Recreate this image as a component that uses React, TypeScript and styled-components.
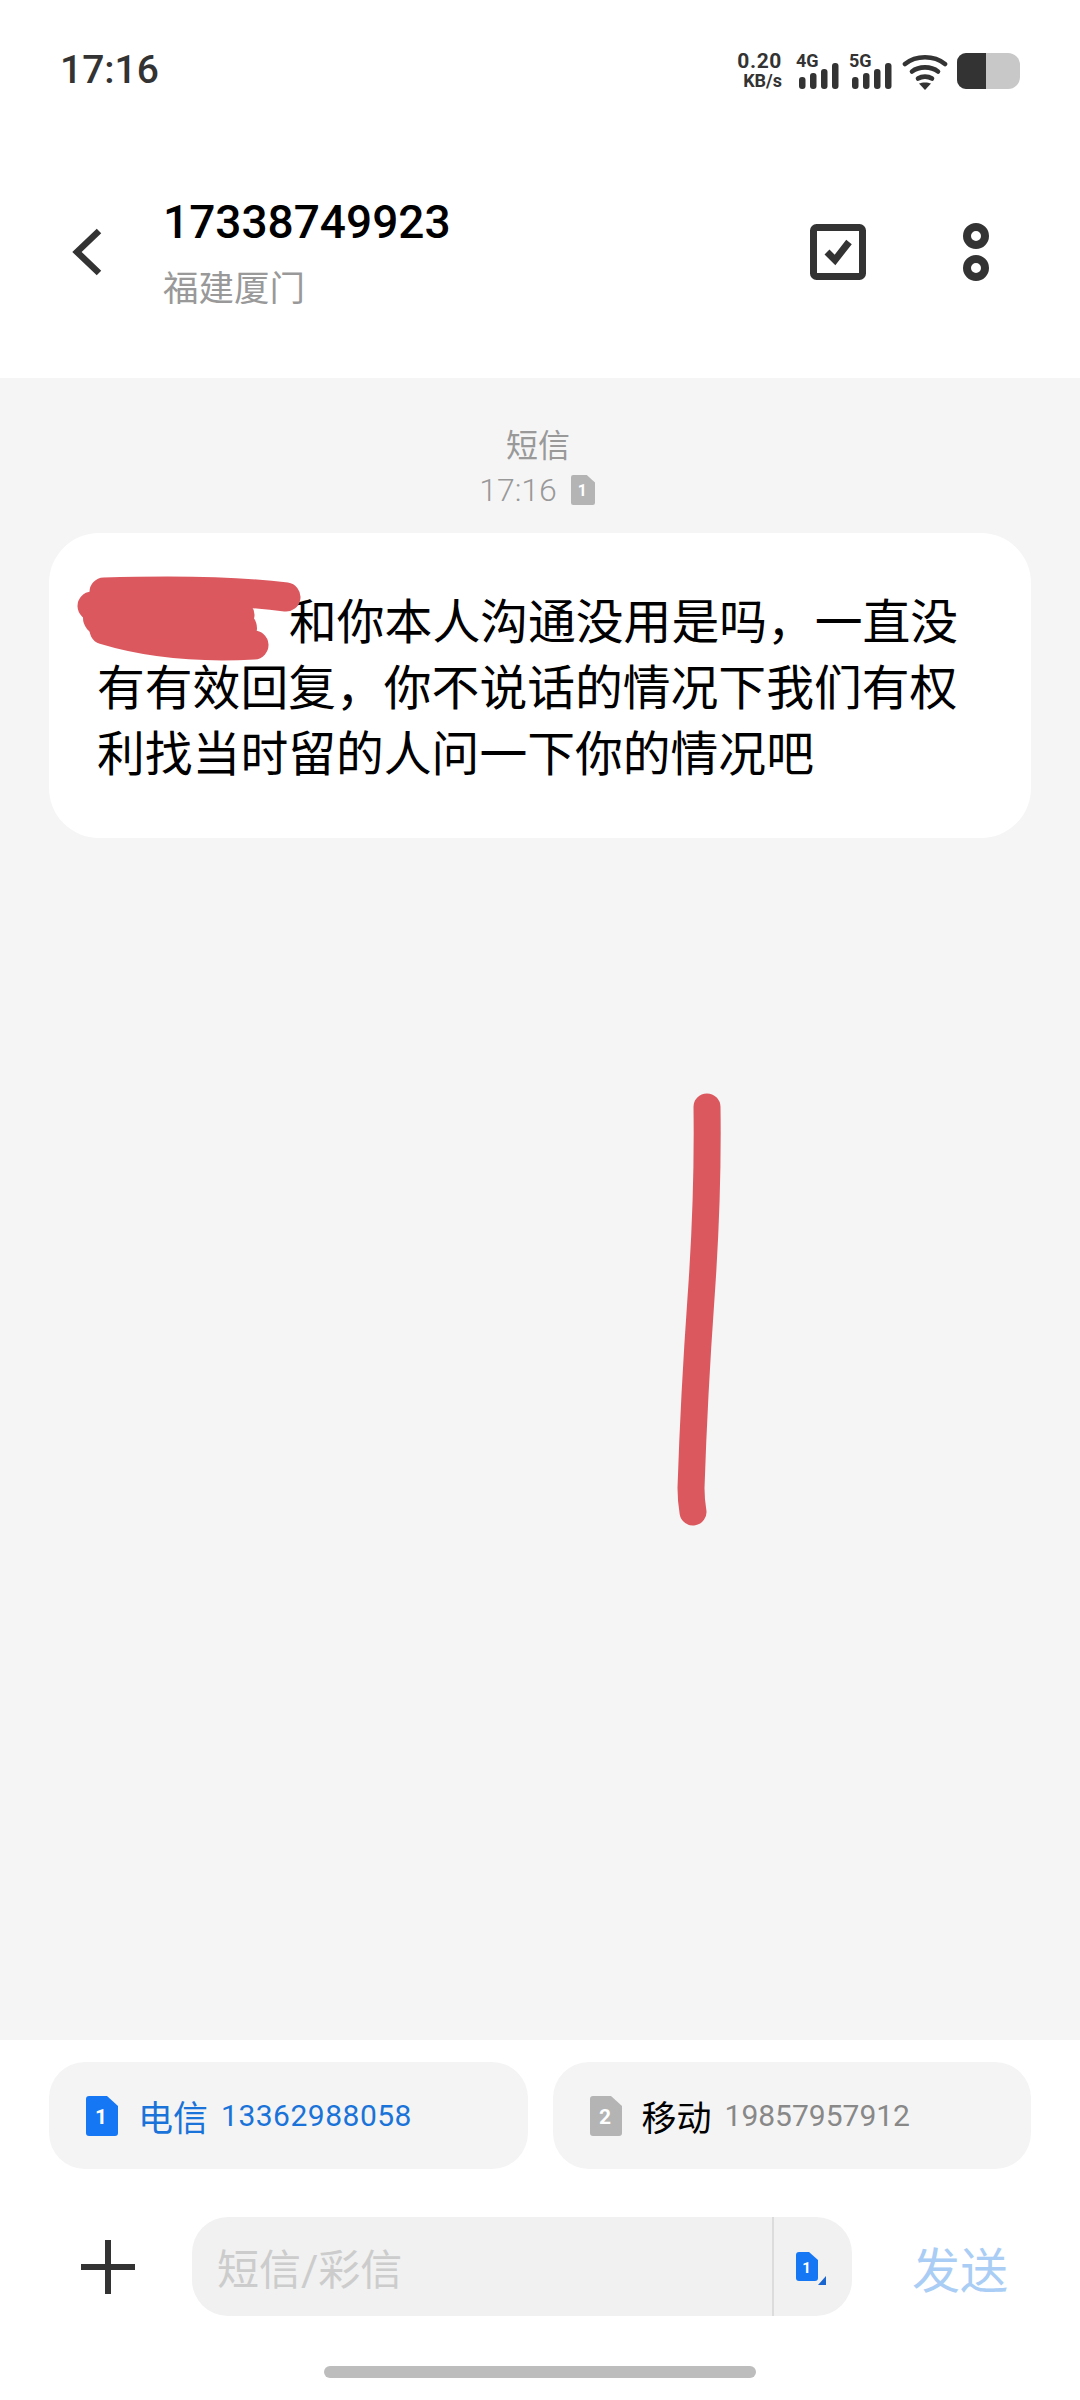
import styled, { createGlobalStyle } from "styled-components"

const GlobalStyle = createGlobalStyle`
	html, body {
		margin: 0;
		padding: 0;
		background: #fff;
		font-family: Roboto, "Noto Sans CJK SC", sans-serif;
	}
	* {
		box-sizing: border-box;
	}
`

const SimIcon = ({ n, color, size = 40 }: { n: string; color: string; size?: number }) => (
	<svg width={(size * 32) / 40} height={size} viewBox="0 0 32 40">
		<path
			d="M3 0H21L32 10V37a3 3 0 0 1-3 3H3a3 3 0 0 1-3-3V3a3 3 0 0 1 3-3Z"
			fill={color}
		/>
		<text x="15" y="28" fontSize="21" fontWeight="700" fill="#fff" textAnchor="middle" fontFamily="Roboto">
			{n}
		</text>
	</svg>
)

const Signal = ({ label }: { label: string }) => (
	<svg width="44" height="42" viewBox="0 -4 44 42">
		<text x="0" y="15" fontSize="18" fontWeight="700" fill="#333" fontFamily="Roboto">
			{label}
		</text>
		<g fill="#333">
			<rect x="3" y="25" width="6.5" height="12" rx="3" />
			<rect x="14" y="21" width="6.5" height="16" rx="3" />
			<rect x="25" y="17" width="6.5" height="20" rx="3" />
			<rect x="36" y="11" width="6.5" height="26" rx="3" />
		</g>
	</svg>
)

const App = () => {
	return (
		<Page>
			<GlobalStyle />
			<TopArea>
				<StatusBar>
					<Clock>17:16</Clock>
					<StatusIcons>
						<Speed>
							<b>0.20</b>
							<span>KB/s</span>
						</Speed>
						<Signal label="4G" />
						<Signal label="5G" />
						<svg width="46" height="36" viewBox="0 0 46 36">
							<g fill="none" stroke="#333" strokeWidth="4.6" strokeLinecap="round">
								<path d="M3 10C14 1 32 1 43 10" />
								<path d="M10 17.5C17 12 29 12 36 17.5" />
								<path d="M16 24.5C20 22 26 22 30 24.5" />
							</g>
							<path d="M17 29.5C20 28 26 28 29 29.5L23 36Z" fill="#333" />
						</svg>
						<Battery>
							<BatteryLevel />
						</Battery>
					</StatusIcons>
				</StatusBar>
				<Header>
					<BackIcon width="32" height="48" viewBox="0 0 32 48">
						<path d="M29 3L7 24L29 45" fill="none" stroke="#333" strokeWidth="6.5" strokeLinejoin="miter" />
					</BackIcon>
					<Contact>
						<Phone>17338749923</Phone>
						<Region>福建厦门</Region>
					</Contact>
					<HeaderActions>
						<svg width="56" height="56" viewBox="0 0 56 56">
							<rect x="3.5" y="3.5" width="49" height="49" rx="3" fill="none" stroke="#333" strokeWidth="7" />
							<path d="M17 28L25 36L39 18" fill="none" stroke="#333" strokeWidth="7" />
						</svg>
						<svg width="26" height="58" viewBox="0 0 26 58">
							<circle cx="13" cy="13" r="9" fill="none" stroke="#333" strokeWidth="8" />
							<circle cx="13" cy="45" r="9" fill="none" stroke="#333" strokeWidth="8" />
						</svg>
					</HeaderActions>
				</Header>
			</TopArea>

			<Thread>
				<MessageMeta>
					<MetaType>短信</MetaType>
					<MetaTime>
						17:16
						<SimIcon n="1" color="#b4b4b4" size={30} />
					</MetaTime>
				</MessageMeta>
				<Bubble>
					<NameGap />
					和你本人沟通没用是吗，一直没有有效回复，你不说话的情况下我们有权利找当时留的人问一下你的情况吧
					<Redaction width="260" height="120" viewBox="60 560 260 120">
						<g fill="none" stroke="#dc585f" strokeLinecap="round" strokeWidth="29">
							<path d="M104 594C170 592 240 593 286 599" />
							<path d="M92 608C140 606 200 612 240 617" />
							<path d="M104 632C150 646 200 650 254 647" />
							<path d="M100 620L240 630" strokeWidth="34" />
						</g>
					</Redaction>
				</Bubble>
				<PenStroke width="60" height="460" viewBox="0 0 60 460">
					<path
						d="M43 29C44 100 42 150 37 220C32 290 29 350 27 410C27 420 28 428 29 434"
						fill="none"
						stroke="#dc585f"
						strokeWidth="27"
						strokeLinecap="round"
					/>
				</PenStroke>
			</Thread>

			<BottomArea>
				<SimRow>
					<SimChip>
						<SimIcon n="1" color="#1677f5" />
						<Carrier $active>电信</Carrier>
						<SimNumber $active>13362988058</SimNumber>
					</SimChip>
					<SimChip>
						<SimIcon n="2" color="#b4b4b4" />
						<Carrier>移动</Carrier>
						<SimNumber>19857957912</SimNumber>
					</SimChip>
				</SimRow>
				<Composer>
					<svg width="54" height="54" viewBox="0 0 54 54">
						<path d="M27 0V54M0 27H54" stroke="#333" strokeWidth="6" />
					</svg>
					<InputBox>
						<Placeholder>短信/彩信</Placeholder>
						<InputSim>
							<svg width="32" height="36" viewBox="0 0 32 36">
								<path d="M3 0H13L22 8V26a3 3 0 0 1-3 3H3a3 3 0 0 1-3-3V3a3 3 0 0 1 3-3Z" fill="#1677f5" />
								<text x="10.5" y="21" fontSize="15" fontWeight="700" fill="#fff" textAnchor="middle" fontFamily="Roboto">
									1
								</text>
								<path d="M30 24V33H22Z" fill="#1a66d0" />
							</svg>
						</InputSim>
					</InputBox>
					<SendLabel>发送</SendLabel>
				</Composer>
				<HomeBar />
			</BottomArea>
		</Page>
	)
}

export default App

const Page = styled.div`
	width: 1080px;
	height: 2400px;
	display: flex;
	flex-direction: column;
	overflow: hidden;
	background: #fff;
`

const TopArea = styled.div`
	height: 378px;
	background: #fff;
	display: flex;
	flex-direction: column;
`

const StatusBar = styled.div`
	height: 140px;
	display: flex;
	align-items: center;
	justify-content: space-between;
	padding: 0 60px 0 60px;
`

const Clock = styled.div`
	font-size: 39px;
	font-weight: 500;
	color: #333;
`

const StatusIcons = styled.div`
	display: flex;
	align-items: flex-end;
	gap: 9px;
	height: 40px;
`

const Speed = styled.div`
	display: flex;
	flex-direction: column;
	align-items: flex-end;
	width: 48px;
	margin-right: 5px;
	color: #333;
	line-height: 19px;
	b {
		font-size: 21px;
		font-weight: 700;
		letter-spacing: 0.6px;
	}
	span {
		font-size: 18px;
		font-weight: 700;
	}
`

const Battery = styled.div`
	width: 63px;
	height: 36px;
	margin-bottom: 1px;
	border-radius: 9px 12px 12px 9px;
	background: #c8c8c8;
	overflow: hidden;
`

const BatteryLevel = styled.div`
	width: 29px;
	height: 100%;
	background: #333;
`

const Header = styled.div`
	flex: 1;
	display: flex;
	align-items: flex-start;
	padding: 55px 0 0 70px;
`

const BackIcon = styled.svg`
	margin-top: 33px;
	flex-shrink: 0;
`

const Contact = styled.div`
	margin-left: 61px;
	display: flex;
	flex-direction: column;
`

const Phone = styled.div`
	font-size: 46px;
	line-height: 54px;
	font-weight: 500;
	color: #000;
`

const Region = styled.div`
	margin-top: 18px;
	font-size: 35.5px;
	line-height: 44px;
	color: #999;
`

const HeaderActions = styled.div`
	margin-left: auto;
	margin-right: 91px;
	margin-top: 28px;
	display: flex;
	align-items: center;
	gap: 97px;
`

const Thread = styled.div`
	position: relative;
	flex: 1;
	background: #f5f5f5;
	padding: 46px 49px 0;
	display: flex;
	flex-direction: column;
`

const MessageMeta = styled.div`
	display: flex;
	flex-direction: column;
	align-items: center;
	color: #999;
`

const MetaType = styled.div`
	font-size: 32px;
	line-height: 44px;
	margin-right: 4px;
`

const MetaTime = styled.div`
	display: flex;
	align-items: center;
	gap: 14px;
	font-size: 32px;
	font-weight: 300;
	line-height: 44px;
	margin-right: 6px;
`

const Bubble = styled.div`
	position: relative;
	margin-top: 21px;
	height: 305px;
	padding: 53px 40px 0 48px;
	background: #fff;
	border-radius: 50px;
	font-size: 47.8px;
	line-height: 66px;
	color: #000;
	font-family: "Noto Sans CJK SC", sans-serif;
`

const NameGap = styled.span`
	display: inline-block;
	width: 192px;
`

const Redaction = styled.svg`
	position: absolute;
	left: 11px;
	top: 25px;
`

const PenStroke = styled.svg`
	position: absolute;
	left: 664px;
	top: 700px;
`

const BottomArea = styled.div`
	height: 360px;
	display: flex;
	flex-direction: column;
	background: #fff;
`

const SimRow = styled.div`
	display: flex;
	gap: 25px;
	padding: 22px 49px 0;
`

const SimChip = styled.div`
	flex: 1;
	height: 107px;
	display: flex;
	align-items: center;
	padding-left: 37px;
	background: #f4f4f4;
	border-radius: 36px;
`

const Carrier = styled.span<{ $active?: boolean }>`
	margin-left: 20px;
	font-size: 35px;
	color: ${(p) => (p.$active ? "#1a73d8" : "#000")};
`

const SimNumber = styled.span<{ $active?: boolean }>`
	margin-left: 13px;
	font-size: 30px;
	letter-spacing: ${(p) => (p.$active ? "0.5px" : "0")};
	color: ${(p) => (p.$active ? "#1a73d8" : "#888")};
`

const Composer = styled.div`
	display: flex;
	align-items: center;
	margin-top: 48px;
	padding-left: 81px;
`

const InputBox = styled.div`
	margin-left: 57px;
	width: 660px;
	height: 99px;
	display: flex;
	background: #f1f1f1;
	border-radius: 36px;
	overflow: hidden;
`

const Placeholder = styled.div`
	flex: 1;
	display: flex;
	align-items: center;
	padding-left: 25px;
	font-size: 42px;
	color: #ccc;
`

const InputSim = styled.div`
	width: 80px;
	border-left: 2px solid #dcdcdc;
	display: flex;
	align-items: center;
	padding: 6px 0 0 22px;
`

const SendLabel = styled.div`
	margin-left: 60px;
	font-size: 48px;
	color: #a9cdf5;
`

const HomeBar = styled.div`
	width: 432px;
	height: 12px;
	margin: 50px auto 0;
	border-radius: 6px;
	background: #bdbdbd;
`
